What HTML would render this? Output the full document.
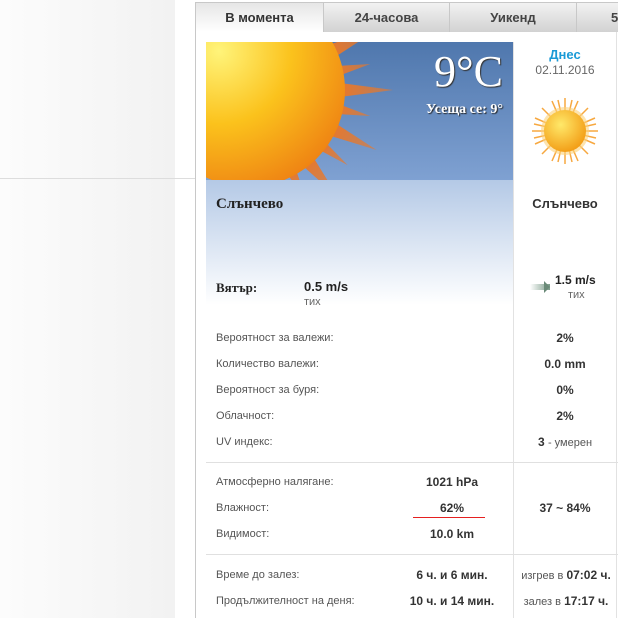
<!DOCTYPE html>
<html><head><meta charset="utf-8"><style>
*{margin:0;padding:0;box-sizing:border-box}
body{width:618px;height:618px;overflow:hidden;background:#fff;font-family:"Liberation Sans",sans-serif;position:relative}
.abs{position:absolute}
.lbl{position:absolute;left:216px;font-size:11px;color:#555}
.val{position:absolute;font-size:12px;font-weight:bold;color:#333;text-align:center}
</style></head><body>
<div class="abs" style="left:0;top:0;width:175px;height:618px;background:linear-gradient(90deg,#fcfcfc,#f2f2f2)"></div>
<div class="abs" style="left:0;top:178px;width:196px;height:1px;background:#ddd"></div>
<div class="abs" style="left:195px;top:2px;width:1px;height:616px;background:#c8c8c8"></div>
<div class="abs" style="left:195px;top:2px;width:423px;height:1px;background:#c8c8c8"></div>
<!-- tabs -->
<div class="abs" style="left:196px;top:3px;width:127px;height:29px;background:linear-gradient(#e6e6e6,#fff);font-size:13px;font-weight:bold;color:#333;text-align:center;line-height:29px">В момента</div>
<div class="abs" style="left:323px;top:3px;width:126px;height:29px;background:linear-gradient(#f2f2f2,#d2d2d2);border-left:1px solid #c8c8c8;font-size:13px;font-weight:bold;color:#444;text-align:center;line-height:29px">24-часова</div>
<div class="abs" style="left:449px;top:3px;width:127px;height:29px;background:linear-gradient(#f2f2f2,#d2d2d2);border-left:1px solid #c8c8c8;font-size:13px;font-weight:bold;color:#444;text-align:center;line-height:29px">Уикенд</div>
<div class="abs" style="left:576px;top:3px;width:42px;height:29px;background:linear-gradient(#f2f2f2,#d2d2d2);border-left:1px solid #c8c8c8;font-size:13px;font-weight:bold;color:#444;line-height:29px;padding-left:34px">5</div>
<!-- image -->
<div class="abs" style="left:206px;top:42px;width:307px;height:138px;overflow:hidden;background:linear-gradient(#4f77ad,#7fa1d2)">
<svg width="307" height="138" style="position:absolute;left:0;top:0">
<defs><radialGradient id="g" cx="0.35" cy="0.3" r="0.75"><stop offset="0" stop-color="#fff47a"/><stop offset="0.5" stop-color="#fbc21c"/><stop offset="1" stop-color="#ef8413"/></radialGradient>
<linearGradient id="r" x1="0" x2="1"><stop offset="0" stop-color="#e8782a"/><stop offset="1" stop-color="#e8782a" stop-opacity="0.6"/></linearGradient></defs>
<g transform="translate(42,48)" fill="url(#r)">
<polygon points="92,-7 140,0 92,7" transform="rotate(-75)"/>
<polygon points="92,-5 125,0 92,5" transform="rotate(-62)"/>
<polygon points="92,-7 140,0 92,7" transform="rotate(-50)"/>
<polygon points="92,-5 125,0 92,5" transform="rotate(-37)"/>
<polygon points="92,-7 142,0 92,7" transform="rotate(-25)"/>
<polygon points="92,-5 125,0 92,5" transform="rotate(-12)"/>
<polygon points="92,-7 145,0 92,7" transform="rotate(0)"/>
<polygon points="92,-5 125,0 92,5" transform="rotate(12)"/>
<polygon points="92,-7 142,0 92,7" transform="rotate(25)"/>
<polygon points="92,-5 125,0 92,5" transform="rotate(37)"/>
<polygon points="92,-7 140,0 92,7" transform="rotate(50)"/>
<polygon points="92,-5 125,0 92,5" transform="rotate(62)"/>
<polygon points="92,-7 135,0 92,7" transform="rotate(75)"/>
<polygon points="92,-5 125,0 92,5" transform="rotate(88)"/>
<polygon points="92,-7 135,0 92,7" transform="rotate(100)"/>
</g>
<circle cx="42" cy="48" r="97" fill="url(#g)"/>
</svg>
<div class="abs" style="right:10px;top:4px;font-family:'Liberation Serif',serif;font-size:44px;color:#fff;text-shadow:1px 1px 1px #333">9°C</div>
<div class="abs" style="right:10px;top:60px;font-family:'Liberation Serif',serif;font-size:14px;font-weight:bold;color:#fff;text-shadow:1px 1px 1px #222">Усеща се: 9°</div>
</div>
<div class="abs" style="left:206px;top:180px;width:307px;height:125px;background:linear-gradient(#b4c9e6,#ffffff)"></div>
<div class="abs" style="left:216px;top:196px;font-family:'Liberation Serif',serif;font-size:15px;font-weight:bold;color:#222">Слънчево</div>
<div class="abs" style="left:216px;top:280px;font-family:'Liberation Serif',serif;font-size:13px;font-weight:bold;color:#222">Вятър:</div>
<div class="abs" style="left:304px;top:279px;font-size:13px;font-weight:bold;color:#222">0.5 m/s</div>
<div class="abs" style="left:304px;top:296px;font-size:11px;color:#666">тих</div>
<!-- right column -->
<div class="abs" style="left:513px;top:42px;width:1px;height:576px;background:#e2e2e2"></div>
<div class="abs" style="left:616px;top:32px;width:1px;height:586px;background:#e2e2e2"></div>
<div class="abs" style="left:514px;top:47px;width:102px;text-align:center;font-size:13px;font-weight:bold;color:#1a9ad6">Днес</div>
<div class="abs" style="left:514px;top:63px;width:102px;text-align:center;font-size:12px;color:#666">02.11.2016</div>
<svg class="abs" style="left:530px;top:96px" width="70" height="70">
<defs><radialGradient id="s" cx="0.4" cy="0.35" r="0.7"><stop offset="0" stop-color="#ffe96a"/><stop offset="1" stop-color="#f29a12"/></radialGradient></defs>
<g stroke="#f7a840" stroke-width="1.5">
<line x1="35" y1="2" x2="35" y2="68"/><line x1="2" y1="35" x2="68" y2="35"/><line x1="12" y1="12" x2="58" y2="58"/><line x1="58" y1="12" x2="12" y2="58"/>
<line x1="22" y1="5" x2="48" y2="65"/><line x1="48" y1="5" x2="22" y2="65"/><line x1="5" y1="22" x2="65" y2="48"/><line x1="5" y1="48" x2="65" y2="22"/>
<line x1="28" y1="4" x2="42" y2="66"/><line x1="42" y1="4" x2="28" y2="66"/><line x1="4" y1="28" x2="66" y2="42"/><line x1="4" y1="42" x2="66" y2="28"/>
</g>
<circle cx="35" cy="35" r="24" fill="#fbd27a" opacity="0.6"/>
<circle cx="35" cy="35" r="21" fill="url(#s)"/>
</svg>
<div class="abs" style="left:514px;top:196px;width:102px;text-align:center;font-size:13px;font-weight:bold;color:#333">Слънчево</div>
<div class="abs" style="left:530px;top:284px;width:20px;height:6px;background:linear-gradient(90deg,#fff,#7a9a88)"></div>
<div class="abs" style="left:544px;top:281px;width:0;height:0;border-left:6px solid #6a8a78;border-top:6px solid transparent;border-bottom:6px solid transparent"></div>
<div class="abs" style="left:555px;top:273px;font-size:12px;font-weight:bold;color:#222">1.5 m/s</div>
<div class="abs" style="left:568px;top:289px;font-size:11px;color:#666">тих</div>
<div class="lbl" style="top:332px">Вероятност за валежи:</div>
<div class="lbl" style="top:358px">Количество валежи:</div>
<div class="lbl" style="top:384px">Вероятност за буря:</div>
<div class="lbl" style="top:410px">Облачност:</div>
<div class="lbl" style="top:436px">UV индекс:</div>
<div class="val" style="left:514px;width:102px;top:331px">2%</div>
<div class="val" style="left:514px;width:102px;top:357px">0.0 mm</div>
<div class="val" style="left:514px;width:102px;top:383px">0%</div>
<div class="val" style="left:514px;width:102px;top:409px">2%</div>
<div class="val" style="left:514px;width:102px;top:435px">3 <span style="font-weight:normal;font-size:11px;color:#555">- умерен</span></div>
<div class="abs" style="left:206px;top:462px;width:412px;height:1px;background:#e0e0e0"></div>
<div class="lbl" style="top:476px">Атмосферно налягане:</div>
<div class="lbl" style="top:502px">Влажност:</div>
<div class="lbl" style="top:528px">Видимост:</div>
<div class="val" style="left:402px;width:100px;top:475px">1021 hPa</div>
<div class="val" style="left:402px;width:100px;top:501px">62%</div>
<div class="abs" style="left:413px;top:517px;width:72px;height:1px;background:#e52020"></div>
<div class="val" style="left:402px;width:100px;top:527px">10.0 km</div>
<div class="val" style="left:514px;width:102px;top:501px">37 ~ 84%</div>
<div class="abs" style="left:206px;top:554px;width:412px;height:1px;background:#e0e0e0"></div>
<div class="lbl" style="top:569px">Време до залез:</div>
<div class="lbl" style="top:595px">Продължителност на деня:</div>
<div class="val" style="left:402px;width:100px;top:568px">6 ч. и 6 мин.</div>
<div class="val" style="left:402px;width:100px;top:594px">10 ч. и 14 мин.</div>
<div class="val" style="left:514px;width:104px;top:568px;white-space:nowrap"><span style="font-weight:normal;font-size:11px;color:#555">изгрев в </span>07:02 ч.</div>
<div class="val" style="left:514px;width:104px;top:594px;white-space:nowrap"><span style="font-weight:normal;font-size:11px;color:#555">залез в </span>17:17 ч.</div>
</body></html>
